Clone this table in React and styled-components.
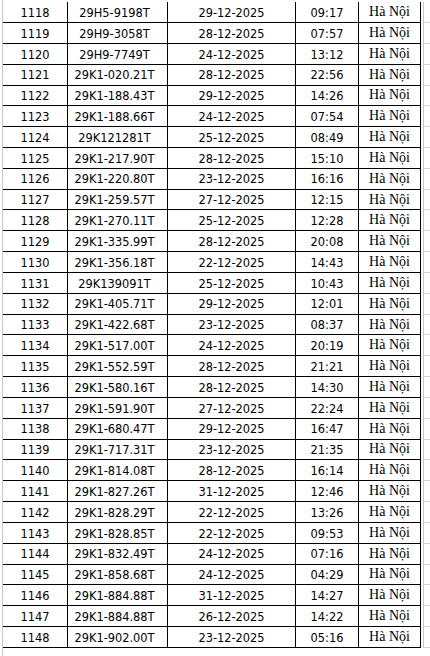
import React from 'react';
import styled, { createGlobalStyle } from 'styled-components';

const rows = [
   ['1118', '29H5-9198T', '29-12-2025', '09:17'],
   ['1119', '29H9-3058T', '28-12-2025', '07:57'],
   ['1120', '29H9-7749T', '24-12-2025', '13:12'],
   ['1121', '29K1-020.21T', '28-12-2025', '22:56'],
   ['1122', '29K1-188.43T', '29-12-2025', '14:26'],
   ['1123', '29K1-188.66T', '24-12-2025', '07:54'],
   ['1124', '29K121281T', '25-12-2025', '08:49'],
   ['1125', '29K1-217.90T', '28-12-2025', '15:10'],
   ['1126', '29K1-220.80T', '23-12-2025', '16:16'],
   ['1127', '29K1-259.57T', '27-12-2025', '12:15'],
   ['1128', '29K1-270.11T', '25-12-2025', '12:28'],
   ['1129', '29K1-335.99T', '28-12-2025', '20:08'],
   ['1130', '29K1-356.18T', '22-12-2025', '14:43'],
   ['1131', '29K139091T', '25-12-2025', '10:43'],
   ['1132', '29K1-405.71T', '29-12-2025', '12:01'],
   ['1133', '29K1-422.68T', '23-12-2025', '08:37'],
   ['1134', '29K1-517.00T', '24-12-2025', '20:19'],
   ['1135', '29K1-552.59T', '28-12-2025', '21:21'],
   ['1136', '29K1-580.16T', '28-12-2025', '14:30'],
   ['1137', '29K1-591.90T', '27-12-2025', '22:24'],
   ['1138', '29K1-680.47T', '29-12-2025', '16:47'],
   ['1139', '29K1-717.31T', '23-12-2025', '21:35'],
   ['1140', '29K1-814.08T', '28-12-2025', '16:14'],
   ['1141', '29K1-827.26T', '31-12-2025', '12:46'],
   ['1142', '29K1-828.29T', '22-12-2025', '13:26'],
   ['1143', '29K1-828.85T', '22-12-2025', '09:53'],
   ['1144', '29K1-832.49T', '24-12-2025', '07:16'],
   ['1145', '29K1-858.68T', '24-12-2025', '04:29'],
   ['1146', '29K1-884.88T', '31-12-2025', '14:27'],
   ['1147', '29K1-884.88T', '26-12-2025', '14:22'],
   ['1148', '29K1-902.00T', '23-12-2025', '05:16'],
];

export default function App() {
   return (
      <>
         <GlobalStyle />
         <Sheet>
            <Gutter />
            <Table>
               {rows.map(([stt, plate, date, time]) => (
                  <Row key={stt}>
                     <Cell>{stt}</Cell>
                     <Cell $shift={-6}>{plate}</Cell>
                     <Cell>{date}</Cell>
                     <Cell>{time}</Cell>
                     <Cell $serif>Hà Nội</Cell>
                     <Blank />
                  </Row>
               ))}
               <Row>
                  <Blank $wide />
               </Row>
            </Table>
         </Sheet>
      </>
   );
}


// Styled components
const GlobalStyle = createGlobalStyle`
   html, body {
      margin: 0;
      padding: 0;
      background: #fff;
      overflow: hidden;
   }
`;

const Sheet = styled.div`
   display: flex;
   width: 430px;
   height: 656px;
   overflow: hidden;
   background: #fff;
`;

const Gutter = styled.div`
   width: 2px;
   flex: none;
   border-right: 1px solid #c8c8c8;
`;

const Table = styled.div`
   display: flex;
   flex-direction: column;
   margin-top: 2.2px;
`;

const Row = styled.div`
   display: grid;
   grid-template-columns: 65px 100px 128px 63px 62px 9px;
   height: 20.83px;
   flex: none;
`;

const Cell = styled.div`
   display: flex;
   align-items: center;
   justify-content: center;
   box-sizing: border-box;
   padding-top: ${p => (p.$serif ? '0' : '1.5px')};
   padding-right: ${p => (p.$shift ? `${-p.$shift}px` : '0')};
   border-right: 1px solid #000;
   border-bottom: 1px solid #000;
   color: #000;
   font-family: ${p => (p.$serif ? '"Liberation Serif", serif' : '"DejaVu Sans", sans-serif')};
   font-size: ${p => (p.$serif ? '14px' : '11.4px')};
   white-space: nowrap;
   overflow: hidden;
`;

const Blank = styled.div`
   grid-column: ${p => (p.$wide ? '1 / -1' : 'auto')};
   box-sizing: border-box;
   margin-left: ${p => (p.$wide ? '0' : '2px')};
   border-left: ${p => (p.$wide ? 'none' : '1px solid #c8c8c8')};
   border-bottom: 1px solid #d4d4d4;
`;
